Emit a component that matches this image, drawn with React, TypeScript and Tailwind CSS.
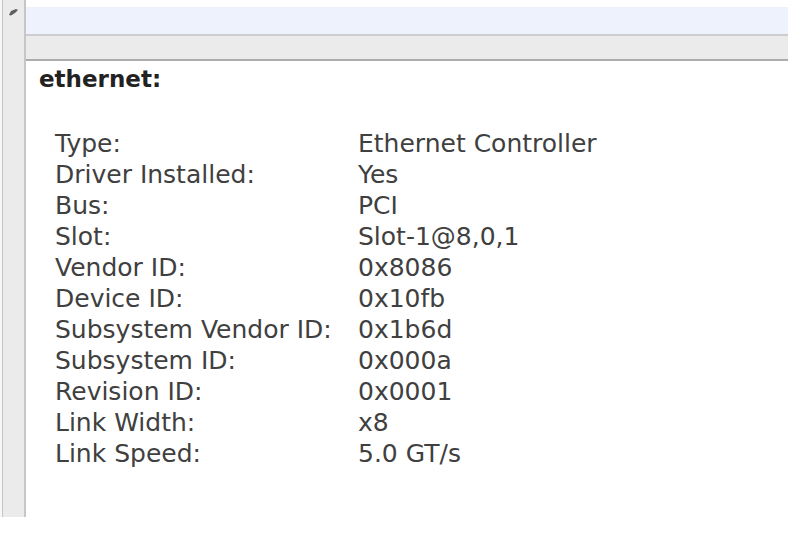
const rows: [string, string][] = [
  ["Type:", "Ethernet Controller"],
  ["Driver Installed:", "Yes"],
  ["Bus:", "PCI"],
  ["Slot:", "Slot-1@8,0,1"],
  ["Vendor ID:", "0x8086"],
  ["Device ID:", "0x10fb"],
  ["Subsystem Vendor ID:", "0x1b6d"],
  ["Subsystem ID:", "0x000a"],
  ["Revision ID:", "0x0001"],
  ["Link Width:", "x8"],
  ["Link Speed:", "5.0 GT/s"],
];

export default function App() {
  return (
    <div className="w-[788px] h-[556px] bg-white flex flex-col overflow-hidden font-['DejaVu_Sans',sans-serif]">
      <div className="h-[517px] flex">
        {/* left strip */}
        <div className="w-[26px] pl-[2px] bg-[#f7f7f7]">
          <div className="h-full border-l border-r-2 border-[#c6c6c6] bg-[#ebebeb] pt-[8px] pl-[5px]">
            <svg width="11" height="8" viewBox="0 0 11 8">
              <path d="M1 7 L3 3 L8 1 L10 2 L7 5 L3 7.5 Z" fill="#5e5e5e" />
            </svg>
          </div>
        </div>

        <div className="flex-1 flex flex-col">
          <div className="h-[7px] bg-white" />
          <div className="h-[29px] bg-[#eef2fd] border-b-2 border-[#cdcdcd]" />
          <div className="h-[23px] bg-[#ebebeb]" />

          {/* details panel */}
          <div className="flex-1 bg-white border-t-2 border-[#acacac] pl-[13px] pt-[4px]">
            <div className="text-[23px] leading-[28px] font-bold text-[#222]">ethernet:</div>
            <div className="mt-[35px] ml-[16px] grid grid-cols-[303px_1fr] text-[25px] leading-[31px] text-[#404040]">
              {rows.map(([label, value]) => (
                <div key={label} className="contents">
                  <div className="whitespace-nowrap">{label}</div>
                  <div className="whitespace-nowrap">{value}</div>
                </div>
              ))}
            </div>
          </div>
        </div>
      </div>
      <div className="flex-1 bg-white" />
    </div>
  );
}
